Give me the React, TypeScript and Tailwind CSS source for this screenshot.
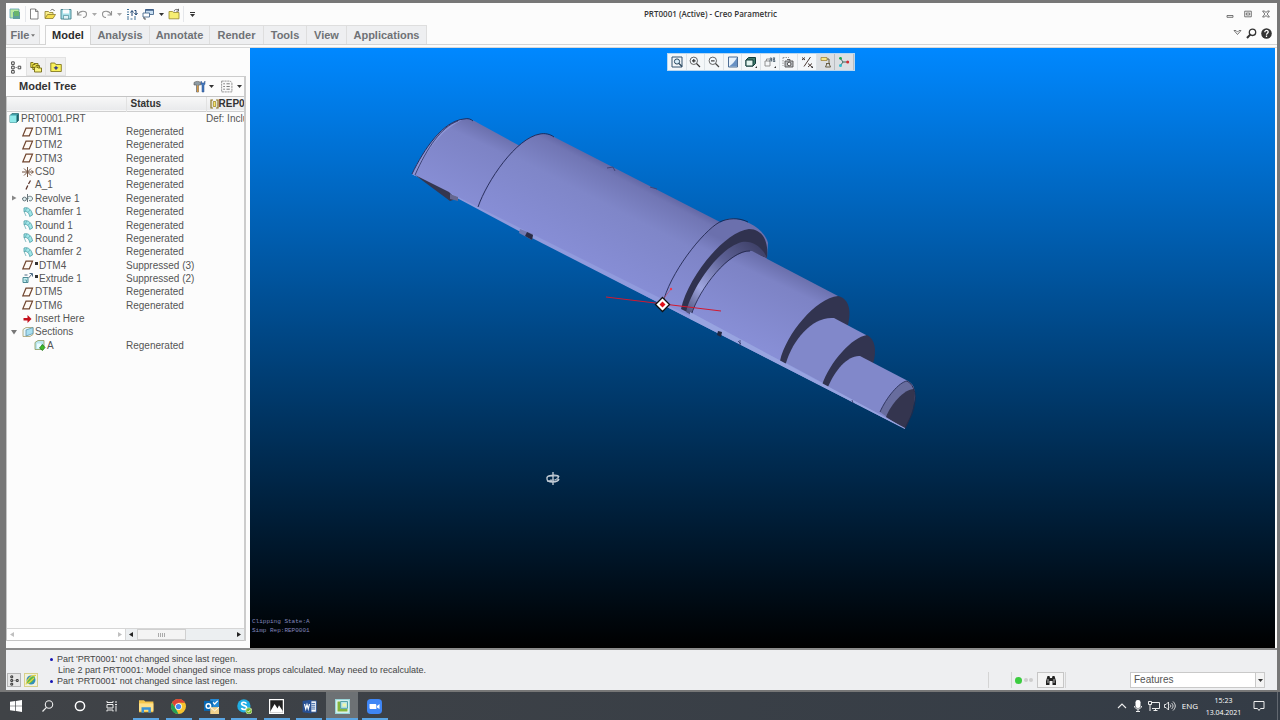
import type { ReactNode } from "react";

interface TreeRow {
    name: string;
    icon: string;
    status?: string;
    rep?: string;
    level: number;
    suppressed?: boolean;
    expander?: "open" | "closed";
}

const treeRows: TreeRow[] = [
    { name: "PRT0001.PRT", icon: "part", level: 0, rep: "Def: Include" },
    { name: "DTM1", icon: "datum", level: 1, status: "Regenerated" },
    { name: "DTM2", icon: "datum", level: 1, status: "Regenerated" },
    { name: "DTM3", icon: "datum", level: 1, status: "Regenerated" },
    { name: "CS0", icon: "csys", level: 1, status: "Regenerated" },
    { name: "A_1", icon: "axis", level: 1, status: "Regenerated" },
    { name: "Revolve 1", icon: "revolve", level: 1, status: "Regenerated", expander: "closed" },
    { name: "Chamfer 1", icon: "round", level: 1, status: "Regenerated" },
    { name: "Round 1", icon: "round", level: 1, status: "Regenerated" },
    { name: "Round 2", icon: "round", level: 1, status: "Regenerated" },
    { name: "Chamfer 2", icon: "round", level: 1, status: "Regenerated" },
    { name: "DTM4", icon: "datum", level: 1, status: "Suppressed (3)", suppressed: true },
    { name: "Extrude 1", icon: "extrude", level: 1, status: "Suppressed (2)", suppressed: true },
    { name: "DTM5", icon: "datum", level: 1, status: "Regenerated" },
    { name: "DTM6", icon: "datum", level: 1, status: "Regenerated" },
    { name: "Insert Here", icon: "insert", level: 1 },
    { name: "Sections", icon: "sections", level: 1, expander: "open" },
    { name: "A", icon: "section", level: 2, status: "Regenerated" },
];

const ribbonTabs = [
    { label: "Analysis", width: "w-[59px]" },
    { label: "Annotate", width: "w-[60px]" },
    { label: "Render", width: "w-[54px]" },
    { label: "Tools", width: "w-[43px]" },
    { label: "View", width: "w-[40px]" },
    { label: "Applications", width: "w-[80px]" },
];

function Icon({ children, size = 12 }: { children: ReactNode; size?: number }) {
    return (
        <svg width={size} height={size} viewBox="0 0 12 12" fill="none" className="shrink-0">
            {children}
        </svg>
    );
}

function Caret({ light }: { light?: boolean }) {
    return (
        <svg width="5" height="3" viewBox="0 0 5 3" className="shrink-0">
            <path d="M0 0h5L2.5 3z" fill={light ? "#aaaaaa" : "#333333"} />
        </svg>
    );
}

const treeIcons: Record<string, ReactNode> = {
    part: (
        <>
            <path d="M2 3.5 4 1.5h6.5v7l-2 2H2z" fill="#3f9fa8" stroke="#35767c" strokeWidth=".8" />
            <path d="M2 3.5h6.5v7H2z" fill="#8feaea" />
            <path d="M8.7 3.5 10.5 1.7v6.8l-1.8 2z" fill="#1f6068" />
        </>
    ),
    datum: <path d="M4 2.2h6.5L7.300 9.800H.8z" stroke="#70452f" strokeWidth="1.2" fill="#fffaf5" />,
    csys: <path d="M0 6h11M5.500 1v10M2 2.500l7 7M9 2.500l-7 7M9.500 4.500l2 1.500-2 1.500" stroke="#70513f" strokeWidth="1" />,
    axis: <path d="M8.5 1.5 6.5 5M5.8 6.5 4 10.5" stroke="#5c352c" strokeWidth="1.3" />,
    revolve: (
        <g stroke="#67757a" strokeWidth="1">
            <path d="M0 6.500h11M5.500 2v8" />
            <circle cx="2.500" cy="7" r="1.900" fill="#dff0f2" />
            <path d="M6 5c2-1.500 4.500-.5 4.500 1.500s-2 3-3.500 2" fill="#dff0f2" />
        </g>
    ),
    round: (
        <>
            <path d="M2 2c4-1.5 8 2 8.5 7l-2.8 1.5C7 7 5.5 5 2 5.5z" fill="#9fe5e8" stroke="#4a9ca3" strokeWidth=".8" />
            <path d="M2 5.5 4 10M4.5 2 3.5 5M8 4 6 6.5" stroke="#5aa4aa" strokeWidth=".7" />
        </>
    ),
    extrude: (
        <>
            <path d="M1 5.500h5v5H1z" fill="#c4f0f2" stroke="#4d8a95" strokeWidth="1" />
            <path d="M2.500 3h3M6.500 6 10 2M7.500 1.500h3v3" stroke="#4f6d85" strokeWidth="1" />
            <path d="M2.500 8h2v2" stroke="#4d8a95" strokeWidth=".8" />
        </>
    ),
    insert: <path d="M1.500 5H5.500V2l4 4-4 4V7.500h-4z" fill="#c4101c" />,
    sections: (
        <>
            <path d="M1 3.5 4 1.5h7v7L8 10.5H1z" fill="#e5f6fa" stroke="#a89f6a" strokeWidth=".8" />
            <path d="M4 4 11 1.5v6L4 10z" fill="#a9dff0" stroke="#5f95ac" strokeWidth=".8" />
        </>
    ),
    section: (
        <>
            <path d="M1 3.5 4 1.5h6v6L8 10.5H1z" fill="#b9e6ee" stroke="#8a9a5a" strokeWidth=".8" />
            <path d="M3 4.5h4v5H3z" fill="#e9fbff" />
            <path d="M8.500 5.500 11 8.500 8.500 11.500 5.500 9z" fill="#3fbb27" stroke="#176b10" strokeWidth=".7" />
        </>
    ),
};

const quickIcons = {
    app: (
        <>
            <path d="M1 1h9v9H1z" fill="#b9e9a0" stroke="#5aa0b5" strokeWidth=".8" />
            <path d="M4 4h7v7H4z" fill="#5f9f9d" />
            <path d="M5 3h5v5H5z" fill="#68b56c" />
        </>
    ),
    file: <path d="M2.5 1h5L10 3.5V11H2.5zM7.5 1v2.5H10" fill="#fff" stroke="#666" strokeWidth=".8" />,
    open: (
        <>
            <path d="M1 10V3.5h3.5l1 1H9V6" fill="#f9ee8b" stroke="#8a7a28" strokeWidth=".8" />
            <path d="M1 10.5 3.5 6.5H11.5L9 10.5z" fill="#f4dd4e" stroke="#8a7a28" strokeWidth=".8" />
            <path d="M6.5 2.5C8 1 9.5 1 10.5 3" stroke="#555" strokeWidth=".9" />
        </>
    ),
    save: (
        <>
            <path d="M1 1.5h10V11H1z" fill="#a5dfe8" stroke="#417f8b" strokeWidth=".9" />
            <path d="M3 1.5h6v4H3z" fill="#fafcfd" />
            <path d="M3.5 7.5h5V11h-5z" fill="#e3f3f6" stroke="#417f8b" strokeWidth=".6" />
        </>
    ),
    undo: <path d="M1.5 3v4h4M1.8 6.7C3.5 2.5 10.5 2 10.5 6c0 2-1.5 3.5-3.5 3.5" stroke="#929292" strokeWidth="1.1" />,
    redo: <path d="M10.5 3v4h-4M10.2 6.7C8.5 2.5 1.5 2 1.5 6c0 2 1.5 3.5 3.5 3.5" stroke="#929292" strokeWidth="1.1" />,
    regen: (
        <>
            <path d="M1 1.500h2M1 4h2M1 6.500h2M1 9h2M1 11h2M4.500 11h2M8 11h2M8 9h2" stroke="#3c6f96" strokeWidth="1.200" />
            <path d="M6 8V3M4.500 4.500 6 2.500l1.500 2M8.500 2.500H10V6M8.500 5 10 7l1.500-2" stroke="#1d4370" strokeWidth="1" />
        </>
    ),
    windows: (
        <>
            <path d="M3.5 1.5h8v5h-8z" fill="#c9dff2" stroke="#4a6b8f" strokeWidth=".9" />
            <path d="M3.5 2h8" stroke="#315480" strokeWidth="1.4" />
            <path d="M1 5h6.5v4H1z" fill="#fff" stroke="#4a6b8f" strokeWidth=".9" />
            <path d="M2 9v2h2" stroke="#444" strokeWidth=".9" />
        </>
    ),
    close: (
        <>
            <path d="M1 10.8V3.5h3.5l1 1H11v6.3z" fill="#f6ee72" stroke="#958628" strokeWidth=".8" />
            <path d="M6 3.5C6.5 1.5 8 1 10 1.8M10.5.8v2.4H8.3" stroke="#555" strokeWidth=".9" />
        </>
    ),
};

function QuickButton({ label, children }: { label: string; children: ReactNode }) {
    return (
        <button aria-label={label} className="flex w-4 h-4 items-center justify-center">
            <Icon>{children}</Icon>
        </button>
    );
}

function TitleBar() {
    return (
        <header className="relative flex h-[22px] items-center pl-px pr-[7px]">
            <QuickButton label="Creo">{quickIcons.app}</QuickButton>
            <span className="w-[3px] h-4 border-r border-gray-200" />
            <QuickButton label="New">{quickIcons.file}</QuickButton>
            <QuickButton label="Open">{quickIcons.open}</QuickButton>
            <QuickButton label="Save">{quickIcons.save}</QuickButton>
            <QuickButton label="Undo">{quickIcons.undo}</QuickButton>
            <span className="flex w-[9px] justify-center"><Caret light /></span>
            <QuickButton label="Redo">{quickIcons.redo}</QuickButton>
            <span className="flex w-[9px] justify-center"><Caret light /></span>
            <QuickButton label="Regenerate">{quickIcons.regen}</QuickButton>
            <QuickButton label="Windows">{quickIcons.windows}</QuickButton>
            <span className="flex w-[10px] justify-center"><Caret /></span>
            <QuickButton label="Close window">{quickIcons.close}</QuickButton>
            <span className="w-[2px] h-4 border-r border-gray-200" />
            <button aria-label="Customize toolbar" className="flex w-4 flex-col items-center gap-px">
                <span className="w-[5px] h-px bg-[#333]" />
                <Caret />
            </button>
            <h1 className="pointer-events-none absolute inset-x-0 pl-[138px] text-center font-['Open_Sans',sans-serif] text-[8px] leading-[12px] font-semibold text-[#333]">
                PRT0001 (Active) - Creo Parametric
            </h1>
            <div className="ml-auto flex items-center gap-[10px]">
                <button aria-label="Minimize">
                    <svg width="8" height="8" viewBox="0 0 8 8"><path d="M1 5.5h6v1.8H1z" fill="none" stroke="#555" strokeWidth=".8" /></svg>
                </button>
                <button aria-label="Restore">
                    <svg width="8" height="8" viewBox="0 0 8 8"><path d="M.7 1.2h6.6v5.6H.7zM2.3 3h3.4v2H2.3z" fill="none" stroke="#555" strokeWidth=".8" /></svg>
                </button>
                <button aria-label="Close">
                    <svg width="8" height="8" viewBox="0 0 8 8"><path d="M.6 1h2L4 2.6 5.4 1h2L5.2 4l2.2 3h-2L4 5.4 2.6 7h-2L2.8 4z" fill="none" stroke="#555" strokeWidth=".8" /></svg>
                </button>
            </div>
        </header>
    );
}

function Ribbon() {
    return (
        <nav className="flex h-5 items-stretch text-[11px] font-bold text-[#6f7276] border-b border-[#d4d4d4]">
            <button className="flex w-[34px] items-center justify-center gap-[2px] border border-b-0 border-[#dcdcdc] bg-[#eeeff1]">
                File
                <svg width="4" height="3" viewBox="0 0 5 3"><path d="M0 0h5L2.5 3z" fill="#777" /></svg>
            </button>
            <button className="ml-[5px] -mb-px w-[46px] border border-b-0 border-[#d4d4d4] bg-[#fdfdfd] text-[#2c2c2c]">
                Model
            </button>
            {ribbonTabs.map((tab) => (
                <button
                    key={tab.label}
                    className={`${tab.width} whitespace-nowrap border-t border-r border-[#dedede] bg-[#eeeff1]`}
                >
                    {tab.label}
                </button>
            ))}
            <div className="ml-auto flex items-center gap-1 pr-[5px] pb-[3px]">
                <button aria-label="Minimize ribbon">
                    <svg width="9" height="8" viewBox="0 0 9 8"><path d="M1 1.5h2l1.5 1.6L6 1.5h2L4.500 5.500z" fill="none" stroke="#555" strokeWidth=".8" /></svg>
                </button>
                <button aria-label="Search">
                    <svg width="11" height="11" viewBox="0 0 11 11"><circle cx="6.500" cy="4.300" r="3.200" fill="none" stroke="#333" strokeWidth="1.300" /><path d="M4.200 6.600 1 10" stroke="#333" strokeWidth="2" /></svg>
                </button>
                <button aria-label="Help">
                    <svg width="11" height="11" viewBox="0 0 11 11"><circle cx="5.500" cy="5.500" r="5.300" fill="#333" /><path d="M3.800 4.200C3.800 1.800 7.200 2 7.200 4c0 1.300-1.700 1.300-1.700 2.700M5.500 7.600v1.300" fill="none" stroke="#fff" strokeWidth="1.300" /></svg>
                </button>
            </div>
        </nav>
    );
}

function TreePanel() {
    return (
        <aside className="flex w-[240px] shrink-0 flex-col mr-1 pt-[9px] pb-[7px]">
            <div className="flex h-[19px] items-stretch">
                <button aria-label="Model tree" className="flex w-5 items-center justify-center border-t border-[#e2e2e2]">
                    <Icon size={13}>
                        <path d="M1.500.8h2.400v2.400H1.500zM1.500 4.800h2.400v2.400H1.500zM1.500 8.800h2.400v2.400H1.500zM7.500 4.800h2.400v2.400H7.500z" stroke="#444" strokeWidth=".9" />
                        <path d="M5 6h1.500M2.700 3.200v1.300M2.700 7.500v1" stroke="#777" strokeWidth=".7" />
                    </Icon>
                </button>
                <button aria-label="Folder browser" className="flex w-5 items-center justify-center border border-[#e2e2e2] bg-[#f0f0f0]">
                    <Icon>
                        <path d="M.8 6.500V1.500H3l1 1h4v4zM2.800 8.500V3.500H5l1 1h3.500v4z" fill="#f1e84e" stroke="#746914" strokeWidth=".9" />
                        <path d="M4.500 11V6H7l1 1h3.500v4z" fill="#faf580" stroke="#746914" strokeWidth=".9" />
                    </Icon>
                </button>
                <button aria-label="Favorites" className="flex w-5 items-center justify-center border border-l-0 border-[#e2e2e2] bg-[#f0f0f0]">
                    <Icon>
                        <path d="M.8 10.500V2h4l1 1.500h5.500v7z" fill="#f8f158" stroke="#857922" strokeWidth=".9" />
                        <path d="M6 4.700 7 6l1.500.7L7 7.700 6 9.200l-1-1.500L3.500 6.700 5 6z" fill="#3a4188" />
                    </Icon>
                </button>
            </div>
            <section className="flex min-h-0 flex-1 flex-col border-t border-r-2 border-[#cccccc]">
                <div className="flex h-[19px] shrink-0 items-center pl-[13px] pr-[2px]">
                    <h2 className="text-[11px] leading-[15px] font-bold text-[#333]">Model Tree</h2>
                    <button aria-label="Tree settings" className="ml-auto flex items-center gap-[3px]">
                        <svg width="13" height="13" viewBox="0 0 13 13">
                            <path d="M1 2.500C3 1 6 1 7.500 2.500V5H5.500v7H3.500V5H1z" fill="#8d9aa2" stroke="#555" strokeWidth=".6" />
                            <path d="M4 5.500h1.500V12H4z" fill="#d59a45" />
                            <path d="M8 1v3l1 1.500V12h2V5.500L12 4V1l-1 2H9z" fill="#4378bd" stroke="#294f88" strokeWidth=".5" />
                        </svg>
                        <Caret />
                    </button>
                    <button aria-label="Tree display" className="ml-[6px] flex items-center gap-1">
                        <Icon size={13}>
                            <path d="M1.500 1h8L11 2.500V11H1.500z" fill="#fafafa" stroke="#888" strokeWidth=".8" strokeDasharray="2 .6" />
                            <path d="M3 3.500h1.500M3 6h1.500M3 8.500h1.500M6 3.500h3M6 6h3M6 8.500h3" stroke="#777" strokeWidth=".9" />
                        </Icon>
                        <Caret />
                    </button>
                </div>
                <div className="flex min-h-0 flex-1 flex-col overflow-hidden border-t border-l border-b border-[#c4c4c4]">
                    <div className="min-h-0 flex-1 overflow-hidden">
                        <table className="h-[255px] w-full table-fixed border-collapse text-left text-[10px] leading-[13px] text-[#555]">
                            <colgroup>
                                <col className="w-[119px]" />
                                <col className="w-[80px]" />
                                <col />
                            </colgroup>
                            <thead className="text-[#333]">
                                <tr className="h-[14px] border-b border-[#cfcfcf] bg-linear-to-b from-[#f8f8f8] to-[#e9eaec]">
                                    <th className="p-0 border-r border-[#e2e2e2]" aria-label="Name" />
                                    <th className="p-0 pl-1 border-r border-[#e2e2e2]">Status</th>
                                    <th className="p-0">
                                        <span className="flex items-center overflow-hidden pl-[3px]">
                                            <svg width="9" height="10" viewBox="0 0 9 10" className="shrink-0">
                                                <path d="M3 1H1v8h2M6 1h2v8H6" fill="none" stroke="#8a7420" strokeWidth="1.200" />
                                                <path d="M3.300 2.500h2.400v5H3.300z" fill="#f7e56a" stroke="#9a8428" strokeWidth=".8" />
                                            </svg>
                                            REP0001
                                        </span>
                                    </th>
                                </tr>
                            </thead>
                            <tbody>
                                {treeRows.map((row) => (
                                    <tr key={row.name}>
                                        <td className="p-0">
                                            <div className={`flex h-[13px] items-center whitespace-nowrap ${row.level === 0 ? "pl-px" : row.level === 1 ? "pl-1" : "pl-[27px]"}`}>
                                                {row.level === 1 && (
                                                    <span className="flex w-[11px] shrink-0">
                                                        {row.expander === "closed" && (
                                                            <svg width="6" height="6" viewBox="0 0 6 6"><path d="M1 .5 5.500 3 1 5.500z" fill="#888" /></svg>
                                                        )}
                                                        {row.expander === "open" && (
                                                            <svg width="6" height="6" viewBox="0 0 6 6"><path d="M0 1h6L3 5.500z" fill="#777" /></svg>
                                                        )}
                                                    </span>
                                                )}
                                                <Icon>{treeIcons[row.icon]}</Icon>
                                                {row.suppressed && <span className="mb-1 ml-px size-[3px] shrink-0 bg-[#333]" />}
                                                <span className="pl-px">{row.name}</span>
                                            </div>
                                        </td>
                                        <td className="p-0 whitespace-nowrap">{row.status}</td>
                                        <td className="p-0 overflow-hidden whitespace-nowrap">{row.rep}</td>
                                    </tr>
                                ))}
                            </tbody>
                        </table>
                    </div>
                    <div className="flex h-3 shrink-0 border-t border-[#d6d6d6]">
                        <div className="flex w-[118px] items-center justify-between bg-white px-[3px]">
                            <svg width="4" height="5" viewBox="0 0 4 5"><path d="M4 0v5L0 2.500z" fill="#c0c0c0" /></svg>
                            <svg width="4" height="5" viewBox="0 0 4 5"><path d="M0 0v5l4-2.500z" fill="#c0c0c0" /></svg>
                        </div>
                        <div className="flex flex-1 items-center justify-between bg-[#eceff1] border-l border-[#d6d6d6] px-[3px]">
                            <svg width="4" height="5" viewBox="0 0 4 5"><path d="M4 0v5L0 2.500z" fill="#222" /></svg>
                            <span className="flex h-full w-[49px] items-center justify-center gap-px border border-[#d0d0d0] bg-[#f4f4f4] mr-auto ml-1">
                                <i className="h-1 w-px bg-[#aaa]" />
                                <i className="h-1 w-px bg-[#aaa]" />
                                <i className="h-1 w-px bg-[#aaa]" />
                                <i className="h-1 w-px bg-[#aaa]" />
                            </span>
                            <svg width="4" height="5" viewBox="0 0 4 5"><path d="M0 0v5l4-2.500z" fill="#222" /></svg>
                        </div>
                    </div>
                </div>
            </section>
        </aside>
    );
}

function ShaftModel() {
    return (
        <svg className="absolute left-0 top-0" width="1025" height="600" viewBox="250 48 1025 600" fill="none">
            <defs>
                {/* runs across the shaft axis, from the upper edge down to the cut */}
                <linearGradient id="skin" gradientUnits="userSpaceOnUse" x1="650" y1="180" x2="602" y2="273">
                    <stop offset="0" stopColor="#5a5e9c" />
                    <stop offset=".12" stopColor="#7176b4" />
                    <stop offset=".4" stopColor="#7f86c8" />
                    <stop offset="1" stopColor="#878ed6" />
                </linearGradient>
                <linearGradient id="skinSmall" gradientUnits="userSpaceOnUse" x1="800" y1="276" x2="765" y2="350">
                    <stop offset="0" stopColor="#6b70ad" />
                    <stop offset=".2" stopColor="#7d83c5" />
                    <stop offset="1" stopColor="#888fd6" />
                </linearGradient>
                <linearGradient id="fillet" gradientUnits="userSpaceOnUse" x1="762" y1="240" x2="690" y2="314">
                    <stop offset="0" stopColor="#393b60" />
                    <stop offset=".4" stopColor="#5d6196" />
                    <stop offset=".75" stopColor="#a0a7e0" />
                    <stop offset="1" stopColor="#50547f" />
                </linearGradient>
            </defs>

            <path d="M412 174C424 149 443 121 464 119C470 118 474 121 478 123L520 146L480 208Z" fill="url(#skinSmall)" />
            <path d="M412 174C424 149 443 121 464 119C444 128 427 148 415 176Z" fill="#8d95d6" />
            <path d="M412 174C424 149 443 121 464 119C468 118 471 119 473 121" stroke="#1a2656" strokeWidth=".9" />
            <path d="M415 175C427 148 441 127 458 121" stroke="#2a2f5d" strokeWidth=".8" />

            <path d="M412 174 480 207C487 181 516 138 540 134C547 133 552 136 556 138L720 222 744 250 690 319Z" fill="url(#skin)" />
            <path d="M412 174 690 313 781 359 905 427V429L532 238Z" fill="#919bdd" />
            <path d="M478 207C487 181 516 138 540 134C545 133 550 134 554 137" stroke="#1e2450" strokeWidth=".9" />

            <path d="M415 175 449 192 456 199 450 201Z" fill="#343650" />
            <path d="M450 194 458 197V201L450 199Z" fill="#65678f" />
            <path d="M520 229 533 234 532 240 519 233Z" fill="#747ab0" />
            <path d="M527 232 533 235 532 240 525 236Z" fill="#2b2c45" />
            <path d="M607 168 613 167 615 171M650 187 657 189" stroke="#414578" />

            <path d="M664 297C674 264 708 225 728 219C745 217 765 230 768 243L767 258L690 316 664 304Z" fill="url(#skinSmall)" />
            <path d="M664 299C674 266 708 226 722 221C733 217 742 219 748 222" stroke="#171d43" strokeWidth=".8" />
            <path d="M681 309C688 277 724 232 749 229C761 229 769 239 767 258L750 253 691 314Z" fill="#30324f" />
            <path d="M686 312C694 283 721 247 742 242C753 240 763 248 767 258L752 252 693 316Z" fill="url(#fillet)" />

            <path d="M691 316C699 288 730 250 752 251L838 296 848 324 783 362Z" fill="url(#skinSmall)" />
            <path d="M691 316C699 288 730 250 750 251" stroke="#1c2146" strokeWidth=".8" />
            <path d="M780 361C786 334 816 298 838 296C848 298 852 309 848 325L812 345 785 364Z" fill="#323450" />
            <path d="M786 363C793 339 813 316 834 318L866 335 874 357 825 384Z" fill="#8188ca" />
            <path d="M822 385C830 362 852 337 867 335C875 339 877 350 873 364L850 370 828 387Z" fill="#323450" />
            <path d="M828 387C835 370 848 355 860 356L908 381C913 384 915 388 914 393L905 428Z" fill="#8188ca" />
            <path d="M880 412C886 398 899 382 907 381C914 385 917 393 914 403L887 417Z" fill="#686d9e" />
            <path d="M880 412C886 398 899 382 907 381" stroke="#21274e" strokeWidth=".8" />
            <path d="M886 417C891 404 904 389 914 389C917 401 910 420 905 429Z" fill="#34354f" />
            <path d="M907 381C915 385 918 397 912 414L905 428" stroke="#262946" strokeWidth=".9" />
            <path d="M690 312 781 361 905 428 905 429 690 319Z" fill="#98a4e0" />

            <path d="M718 331 722 332 721 337 717 335Z" fill="#222740" />
            <path d="M738 341 741 344M740 340v6M852 400l1 3" stroke="#333b6a" strokeWidth=".8" />
            <path d="M606 297 721 311" stroke="#d3192f" strokeWidth="1" />
            <path d="M664 298 671 289" stroke="#c24c73" strokeWidth=".7" />
            <circle cx="671" cy="289" r="1.200" fill="#f03a4c" />
            <path d="M662.500 297.500 669.500 304.500 662.500 311.500 655.500 304.500Z" fill="#fff" stroke="#111" strokeWidth="1.300" />
            <path d="M662.500 301.500 665.500 304.500 662.500 307.500 659.500 304.500Z" fill="#e00d18" />

            {/* spin cursor */}
            <g stroke="#c5ced7" strokeWidth="1.300">
                <path d="M553 472v13M547 478c0-3 11-4 12-1M559 479c-1 4-12 4-12 0v-2M547 481h5" />
                <path d="M555 480l4-3M549 476h9v4h-8" strokeWidth=".9" />
            </g>
        </svg>
    );
}

const viewTools: { label: string; art: ReactNode; active?: boolean }[] = [
    { label: "Refit", art: <><path d="M1 1h10v10H1z" stroke="#33526e" /><circle cx="6" cy="5.500" r="2.600" fill="#d9edf8" stroke="#28475f" /><path d="m8 7.500 3 3" stroke="#28475f" strokeWidth="1.300" /></> },
    { label: "Zoom in", art: <><circle cx="4.800" cy="4.800" r="3.700" fill="#f6fbff" stroke="#555" strokeWidth=".9" /><path d="M3 4.800h3.600M4.800 3v3.600M7.500 7.500l3.500 3.500" stroke="#333" strokeWidth="1.200" /></> },
    { label: "Zoom out", art: <><circle cx="4.800" cy="4.800" r="3.700" fill="#f6fbff" stroke="#555" strokeWidth=".9" /><path d="M3 4.800h3.600M7.500 7.500l3.500 3.500" stroke="#444" strokeWidth="1.200" /></> },
    { label: "Repaint", art: <><path d="M1.500 1h9v10h-9z" fill="#e8f2fb" stroke="#3b5d88" strokeWidth=".9" /><path d="M10 1.500v9H2C5 8.500 8 5.500 10 1.500z" fill="#6791c4" /></> },
    { label: "Display style", art: <><path d="M1 4 3.500 1.500h7v6L8 10H1z" fill="#3d7a6b" stroke="#103a39" /><path d="M1 4h7v6H1z" fill="#e4f5ef" stroke="#103a39" /><path d="M12 10v2h-2z" fill="#333" /></> },
    { label: "Saved orientations", art: <><path d="M1 5h5v5H1zM2.500 5V3H5" stroke="#888" strokeWidth=".9" /><path d="M6 5.500V2h1.500v3.500M6 3.800h1.500M9.200 5.500V1.800h1.500l-.3 1.700.6 2H9.200M9.200 3.600h1.500" stroke="#3d5464" strokeWidth=".8" /><path d="M12 10v2h-2z" fill="#333" /></> },
    { label: "View manager", art: <><path d="M1 1.500h6M1 1.500V10" stroke="#999" strokeDasharray="1.500 1" /><path d="M3 5h8v6H3zM5 3.500h3V5" fill="#b8bcc0" stroke="#555" strokeWidth=".9" /><circle cx="7.200" cy="8" r="1.800" fill="#fff" stroke="#333" strokeWidth=".8" /></> },
    { label: "Datum display", art: <><path d="M1 1.500 4 4M4 1.500 1 4M9.500 1 3 10.500M7 7.500l4 3.500M11 7.500 7 11" stroke="#4a3a35" strokeWidth="1" /><path d="M12 10v2h-2z" fill="#333" /></> },
    { label: "Annotation display", art: <><path d="M1 1.500h6v3H1z" fill="#f8e686" stroke="#a1863a" strokeWidth=".8" /><path d="M7 3h2v4M6 7.500h4M7 7.500 5.500 11h5L9 7.500" stroke="#665d42" strokeWidth="1" /></>, active: true },
    { label: "Spin center", art: <><path d="M2.500 2.500 5 6h4M5 6 2.500 9.500" stroke="#446860" /><circle cx="2.500" cy="2.300" r="1.400" fill="#18a64d" /><circle cx="9.700" cy="6" r="1.500" fill="#d42d32" /><circle cx="2.500" cy="9.500" r="1.500" fill="#31bccc" /></>, active: true },
];

function Viewport() {
    return (
        <main className="relative flex flex-1 flex-col overflow-hidden bg-linear-to-b/srgb from-[#0088ff] to-black">
            <ShaftModel />
            <div role="toolbar" className="relative mt-[5px] mr-[3px] grid h-[18px] w-[188px] grid-cols-10 self-center border border-[#b8d7f0] bg-[#f4f7f9]">
                {viewTools.map((tool) => (
                    <button
                        key={tool.label}
                        aria-label={tool.label}
                        className={`flex items-center justify-center border-r ${tool.active ? "bg-[#dcdfe2] border-[#b9bdc1]" : "border-[#dde3e7]"}`}
                    >
                        <Icon>{tool.art}</Icon>
                    </button>
                ))}
            </div>
            <div className="relative mt-auto mb-[13px] pl-[2px] font-['Liberation_Mono',monospace] text-[6px] leading-[9px] text-[#8286bd]">
                <p>Clipping State:A</p>
                <p>Simp Rep:REP0001</p>
            </div>
        </main>
    );
}

function StatusBar() {
    return (
        <footer className="flex h-[42px] shrink-0 items-end border-t-2 border-[#8b8b8b] bg-[#eeeff1] pl-px pr-3 text-[#444]">
            <div className="flex gap-[3px] pb-[3px]">
                <button aria-label="Toggle tree" className="flex h-[14px] w-[14px] items-center justify-center border border-[#b5b5b5] bg-[#e6e6e6]">
                    <Icon size={11}>
                        <path d="M2 1h2v2H2zM2 5h2v2H2zM2 9h2v2H2zM8 5h2v2H8z" stroke="#222" />
                        <path d="M5 6h3" stroke="#777" strokeDasharray="1 1" />
                    </Icon>
                </button>
                <button aria-label="Toggle browser" className="flex h-[14px] w-[14px] items-center justify-center border border-[#d7d08a] bg-[#f1f1dc]">
                    <Icon>
                        <circle cx="6" cy="6" r="4.500" fill="#328dba" />
                        <path d="M2 8C4 3 8 2 10 2.500 9 7 6 10 2.500 9.500z" fill="#5dbd45" />
                        <path d="M1 10.500C2 4 7 1 11 1.500M3 9.500 9 4" stroke="#e4d242" strokeWidth="1.200" />
                    </Icon>
                </button>
            </div>
            <ul className="mb-auto ml-3 pt-1 text-[9px] leading-[11px] whitespace-nowrap">
                <li className="flex items-center gap-1"><i className="size-[3px] rounded-full bg-[#1414b4]" />Part 'PRT0001' not changed since last regen.</li>
                <li className="pl-2">Line 2 part PRT0001: Model changed since mass props calculated. May need to recalculate.</li>
                <li className="flex items-center gap-1"><i className="size-[3px] rounded-full bg-[#1414b4]" />Part 'PRT0001' not changed since last regen.</li>
            </ul>
            <div className="ml-auto flex items-center pb-[2px]">
                <span className="h-4 w-6 border-x border-[#d4d4d4]" />
                <span className="ml-[3px] size-[7px] rounded-full bg-[#3ccc40]" />
                <span className="ml-[2px] size-1 rounded-full bg-[#cdcdcd]" />
                <span className="ml-px size-1 rounded-full bg-[#cdcdcd]" />
                <button aria-label="Find" className="ml-1 flex h-4 w-[27px] items-center justify-center border border-[#c6c6c6] bg-[#f4f4f4]">
                    <Icon>
                        <path d="M2.500 2h2L5 4h2l.5-2h2L11 7v4H7.500V7h-3v4H1V7z" fill="#222" />
                        <path d="M3 5v4M9 5v4" stroke="#ddd" strokeWidth=".8" />
                    </Icon>
                </button>
                <span className="h-4 w-[2px] border-r border-[#d4d4d4]" />
                <div className="relative ml-16 flex h-4 w-[135px] border border-[#c9c9c9] bg-white">
                    <select aria-label="Selection filter" className="w-full appearance-none pl-[3px] text-[10px] leading-[14px] text-[#555]">
                        <option>Features</option>
                    </select>
                    <span className="pointer-events-none absolute right-0 inset-y-0 flex w-[9px] items-center justify-center border-l border-[#c9c9c9] bg-[#f4f4f4]">
                        <Caret />
                    </span>
                </div>
            </div>
        </footer>
    );
}

const systemApps: { label: string; art: ReactNode }[] = [
    { label: "Start", art: <path d="M0 1.700 5.300 1v4.700H0zM6 .9 12 0v5.700H6zM0 6.300h5.300V11L0 10.300zM6 6.300h6V12l-6-.9z" fill="#fff" /> },
    { label: "Search", art: <><circle cx="7" cy="4.500" r="3.700" stroke="#eee" strokeWidth="1.100" /><path d="M4.500 7.300.5 11.500" stroke="#eee" strokeWidth="1.200" /></> },
    { label: "Cortana", art: <circle cx="6" cy="6" r="4.600" stroke="#fff" strokeWidth="1.500" /> },
    { label: "Task view", art: <path d="M1 1v1.500h6V1M1 4.500h6v3.500H1zM1 11.500V10h6v1.500M10 1v2M10 5.500v6M9 4.500h2" stroke="#eee" /> },
];

const openApps: { label: string; art: ReactNode; active?: boolean }[] = [
    { label: "File Explorer", art: <><path d="M0 1h4l1 1h6.500v8.500H0z" fill="#f5c64c" /><path d="M0 3.500h11.500v6H0z" fill="#ffe18a" /><path d="M2 6.500h7.500V11H7.500V8.500H4V11H2z" fill="#3a93d6" /></> },
    { label: "Chrome", art: <><circle cx="6" cy="6" r="6" fill="#f5c22f" /><path d="M.8 3A6 6 0 0 1 11.200 3H6L3.500 7z" fill="#dc4437" /><path d="M.8 3 4 8.200 6 12A6 6 0 0 1 .8 3z" fill="#23a056" /><circle cx="6" cy="6" r="2.700" fill="#fff" /><circle cx="6" cy="6" r="2.100" fill="#4286ef" /></> },
    { label: "Outlook", art: <><path d="M5 0h7v8H5z" fill="#2489d4" /><path d="M7 2.500 8.500 4 11 1.500" stroke="#fff" /><path d="M0 1.500h7v8H0z" fill="#0868b4" /><circle cx="3.500" cy="5.500" r="1.800" stroke="#fff" strokeWidth="1.200" /><path d="M5 6.500h7V12H5z" fill="#f1d28d" /><path d="m5 6.500 3.500 3 3.500-3" stroke="#fff" strokeWidth=".7" /></> },
    { label: "Skype", art: <><circle cx="5.500" cy="5.500" r="5.300" fill="#20aee4" /><path d="M7.500 3.700C6.500 2 3.500 2.500 3.700 4c.3 1.800 4 .8 4 3 0 1.700-3.200 2-4.200.2" stroke="#fff" strokeWidth="1.300" /><circle cx="9.500" cy="9.500" r="2.500" fill="#77b92f" stroke="#dfeccb" strokeWidth=".5" /><path d="m8.300 9.500 1 1 1.500-2" stroke="#fff" strokeWidth=".7" /></> },
    { label: "Photos", art: <><path d="M.5.5h11v11H.5z" fill="#222" stroke="#fff" /><path d="M1 10 4.500 4l2.300 3.500L8 5l3 4.500V11H1z" fill="#fff" /></> },
    { label: "Word", art: <><path d="M5 1.500h6.500v9H5z" fill="#fff" stroke="#254f91" strokeWidth=".7" /><path d="M7.500 3.500h3M7.500 5h3M7.500 6.500h3M7.500 8h3" stroke="#3b66a5" strokeWidth=".8" /><path d="M.5 1.500 7.500.5v11l-7-1z" fill="#285195" /><path d="m2 4 1 4 1-3.500L5 8l1-4" stroke="#fff" strokeWidth=".9" /></> },
    { label: "Creo Parametric", art: <><path d="M0 0h12v12H0z" fill="#e9f7f5" /><path d="M.5.5h11v11H.5z" stroke="#99d5d8" /><path d="M2 2h2.500v6H10v2H2z" fill="#84b63d" /><path d="M4.500 2H10v5.500H4.500z" fill="#b8e5e8" stroke="#4399a0" strokeWidth=".7" /><path d="M6 3.500h3V6H6z" fill="#eef6ad" /></>, active: true },
    { label: "Zoom", art: <><rect width="12" height="12" rx="3" fill="#3f86f5" /><path d="M2 4h4.500c.8 0 1 .5 1 1v3H3c-.8 0-1-.5-1-1zM8 5.500 10 4v4L8 6.700z" fill="#fff" /></> },
];

function Taskbar() {
    return (
        <div className="flex h-7 shrink-0 items-stretch bg-linear-to-r from-[#404347] to-[#343c46] pr-[2px] font-['Open_Sans',sans-serif] text-white">
            {systemApps.map((app) => (
                <button key={app.label} aria-label={app.label} className="flex w-8 items-center justify-center">
                    <Icon>{app.art}</Icon>
                </button>
            ))}
            <div className="ml-[2px] grid w-[261px] grid-cols-8">
                {openApps.map((app) => (
                    <button
                        key={app.label}
                        aria-label={app.label}
                        className={`flex flex-col items-center justify-between pt-[7px] ${app.active ? "bg-[#6d7174]" : ""}`}
                    >
                        <Icon size={15}>{app.art}</Icon>
                        <span className={`h-[2px] bg-[#5aa5e3] ${app.active ? "w-full" : "w-[26px]"}`} />
                    </button>
                ))}
            </div>
            <div className="ml-auto flex items-center gap-1">
                <Icon><path d="M2 8 6 4l4 4" stroke="#eee" strokeWidth="1.100" /></Icon>
                <Icon><rect x="3.500" y="0" width="5" height="8" rx="2.200" fill="#fff" /><path d="M2.500 6c0 4 7 4 7 0M6 9v2.500M4 11.500h4" stroke="#eee" /></Icon>
                <Icon><path d="M4 2.500h7.500v6H4M7.500 8.500v2M5.500 10.500h4M.5 1.500h3v3h-3zM2 4.500V11" stroke="#eee" /></Icon>
                <Icon><path d="M.5 4.500H2L4.500 2v8L2 7.500H.5zM6 4.500c1 1 1 2 0 3M7.500 3c2 2 2 4 0 6M9 1.500c3 3 3 6 0 9" stroke="#eee" strokeWidth=".9" /></Icon>
                <span className="ml-[2px] text-[8px]">ENG</span>
                <time className="ml-[3px] w-[37px] pt-px text-center text-[7px] leading-[12px]">
                    15:23
                    <br />
                    13.04.2021
                </time>
                <button aria-label="Notifications" className="ml-[6px] flex w-[14px] justify-center">
                    <Icon><path d="M1 1.500h10v7H7.500L6 10.500l-1.500-2H1z" stroke="#eee" /></Icon>
                </button>
                <span className="ml-[7px] h-7 w-px bg-[#626870]" />
            </div>
        </div>
    );
}

export default function App() {
    return (
        <div className="flex h-screen flex-col overflow-hidden bg-[#6e6e6e] font-['Liberation_Sans',Arial,sans-serif]">
            <div className="flex min-h-0 flex-1 flex-col border-t-[3px] border-r-[3px] border-b-2 border-l-[6px] border-[#777] bg-[#fcfcfc]">
                <TitleBar />
                <Ribbon />
                <div className="h-[3px] shrink-0 border-b border-[#d8d8d8]" />
                <div className="flex min-h-0 flex-1 pr-[2px]">
                    <TreePanel />
                    <Viewport />
                </div>
                <StatusBar />
            </div>
            <Taskbar />
        </div>
    );
}
